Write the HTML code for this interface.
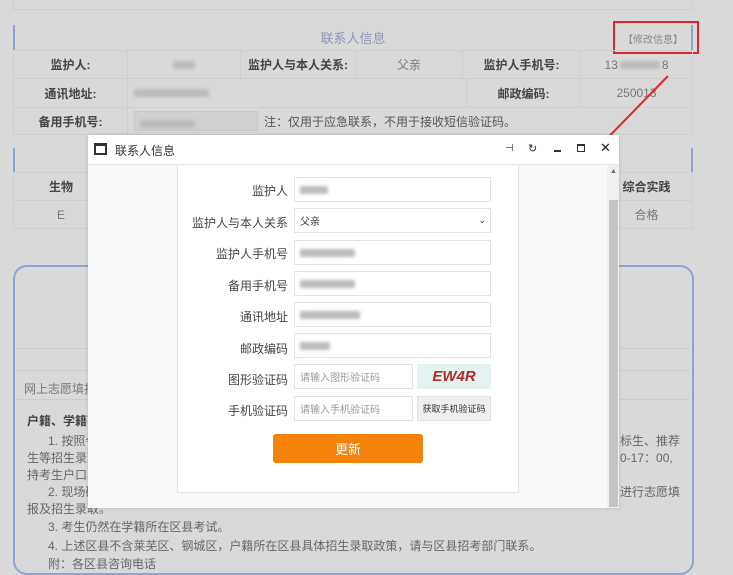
<!DOCTYPE html>
<html><head><meta charset="utf-8"><style>
*{box-sizing:border-box;margin:0;padding:0}
body{width:733px;height:561px;overflow:hidden;background:#d9d9d9;font-family:"Liberation Sans","Noto Sans CJK SC",sans-serif;font-size:12px;color:#333;position:relative}
.a{position:absolute}
.cell{position:absolute;display:flex;align-items:center;justify-content:center;border:1px solid #cfcfcf;font-size:12px}
.b{font-weight:bold;color:#444}
.g{color:#777}
.lbl{position:absolute;left:0;width:288px;text-align:right;font-size:12px;color:#444}
.inp{position:absolute;left:294px;width:197px;height:25px;border:1px solid #e2e2e2;background:#fff;font-size:10px;color:#999;padding-left:5px;display:flex;align-items:center}
.blur{display:inline-block;height:8px;background:#bbb;filter:blur(1.5px);border-radius:2px}
</style></head><body>
<!-- background page -->
<div class="a" style="left:13px;top:0;width:680px;height:10px;border:1px solid #cfcfcf;border-top:none"></div>
<div class="a" style="left:13px;top:25px;width:680px;height:25px;border-left:2px solid #8fa3d0;border-right:2px solid #8fa3d0;display:flex;align-items:center;justify-content:center;color:#8a95b8;font-size:13px">联系人信息</div>
<div class="a" style="left:623px;top:31px;color:#888;font-size:10px">【修改信息】</div>
<div class="a" style="left:613px;top:21px;width:86px;height:33px;border:2px solid #e0262a"></div>
<div class="cell b" style="left:13px;top:50px;width:115px;height:29px">监护人:</div>
<div class="cell" style="left:127px;top:50px;width:114px;height:29px"><span class="blur" style="width:22px"></span></div>
<div class="cell b" style="left:240px;top:50px;width:116px;height:29px">监护人与本人关系:</div>
<div class="cell g" style="left:355px;top:50px;width:108px;height:29px">父亲</div>
<div class="cell b" style="left:462px;top:50px;width:119px;height:29px">监护人手机号:</div>
<div class="cell g" style="left:580px;top:50px;width:113px;height:29px">13<span class="blur" style="width:40px;margin:0 2px"></span>8</div>
<div class="cell b" style="left:13px;top:78px;width:115px;height:30px">通讯地址:</div>
<div class="cell" style="left:127px;top:78px;width:340px;height:30px;justify-content:flex-start;padding-left:6px"><span class="blur" style="width:75px"></span></div>
<div class="cell b" style="left:466px;top:78px;width:115px;height:30px">邮政编码:</div>
<div class="cell g" style="left:580px;top:78px;width:113px;height:30px">250013</div>
<div class="cell b" style="left:13px;top:107px;width:115px;height:28px">备用手机号:</div>
<div class="cell" style="left:127px;top:107px;width:566px;height:28px;justify-content:flex-start;padding-left:6px"><span style="display:inline-block;width:124px;height:20px;background:#d0d0d0;border:1px solid #c8c8c8;padding:5px"><span class="blur" style="width:55px"></span></span><span style="margin-left:6px;color:#555">注：仅用于应急联系，不用于接收短信验证码。</span></div>
<div class="a" style="left:13px;top:148px;width:680px;height:24px;border-left:2px solid #8fa3d0;border-right:2px solid #8fa3d0"></div>
<div class="cell b" style="left:13px;top:172px;width:96px;height:29px">生物</div>
<div class="cell b" style="left:600px;top:172px;width:93px;height:29px">综合实践</div>
<div class="cell g" style="left:13px;top:200px;width:96px;height:29px">E</div>
<div class="cell g" style="left:600px;top:200px;width:93px;height:29px">合格</div>
<div class="a" style="left:13px;top:265px;width:681px;height:310px;border:2px solid #8fa3d0;border-radius:14px"></div>
<div class="a" style="left:16px;top:348px;width:674px;border-top:1px solid #ccc"></div>
<div class="a" style="left:16px;top:370px;width:674px;height:30px;border-top:1px solid #ccc;border-bottom:1px solid #ccc;padding:9px 8px;color:#777">网上志愿填报</div>
<div class="a" style="left:27px;top:412px;font-weight:bold;color:#444">户籍、学籍不</div>
<div class="a" style="left:48px;top:432px;color:#666">1. 按照今</div>
<div class="a" style="left:27px;top:449px;color:#666">生等招生录取</div>
<div class="a" style="left:27px;top:466px;color:#666">持考生户口本</div>
<div class="a" style="left:48px;top:483px;color:#666">2. 现场确</div>
<div class="a" style="left:27px;top:500px;color:#666">报及招生录取。</div>
<div class="a" style="left:48px;top:518px;color:#666">3. 考生仍然在学籍所在区县考试。</div>
<div class="a" style="left:48px;top:537px;color:#666">4. 上述区县不含莱芜区、钢城区，户籍所在区县具体招生录取政策，请与区县招考部门联系。</div>
<div class="a" style="left:48px;top:555px;color:#666">附：各区县咨询电话</div>
<div class="a" style="left:620px;top:432px;color:#666">标生、推荐</div>
<div class="a" style="left:620px;top:449px;color:#666">0-17：00,</div>
<div class="a" style="left:620px;top:483px;color:#666">进行志愿填</div>
<!-- arrow -->
<svg class="a" style="left:0;top:0" width="733" height="561"><line x1="668" y1="76" x2="588" y2="158" stroke="#e0262a" stroke-width="2"/><polygon points="583,164 588,150 595,157" fill="#e0262a"/></svg>
<!-- dialog -->
<div class="a" style="left:88px;top:135px;width:531px;height:373px;background:#f8f9fb;box-shadow:0 0 4px rgba(0,0,0,.15)">
 <div class="a" style="left:0;top:0;width:531px;height:30px;background:#fff;border-bottom:1px solid #e6e6e6">
  <div class="a" style="left:6px;top:8px;width:13px;height:12px;border:2px solid #333;border-top-width:3px"></div>
  <div class="a" style="left:27px;top:7px;font-size:12px;color:#333">联系人信息</div>
  <div class="a" style="left:417px;top:8px;font-size:10px;color:#333">⊣</div>
  <div class="a" style="left:440px;top:7px;font-size:11px;color:#333">↻</div>
  <div class="a" style="left:466px;top:15px;width:7px;height:2px;background:#333"></div>
  <div class="a" style="left:489px;top:9px;width:8px;height:8px;border:1.5px solid #333;border-top-width:2.5px"></div>
  <div class="a" style="left:512px;top:5px;font-size:13px;color:#222">✕</div>
 </div>
 <div class="a" style="left:519px;top:30px;width:12px;height:343px;background:#f0f0f0"></div>
 <div class="a" style="left:521px;top:65px;width:9px;height:307px;background:#c4c4c4"></div>
 <div class="a" style="left:522px;top:33px;font-size:7px;color:#666">▲</div>
 <div class="a" style="left:89px;top:30px;width:342px;height:328px;background:#fff;border:1px solid #e4e4e4;border-top:none"></div>
 <div class="a" style="left:-88px;top:0;width:600px">
  <div class="lbl" style="top:47px">监护人</div><div class="inp" style="top:42px"><span class="blur" style="width:28px"></span></div>
  <div class="lbl" style="top:79px">监护人与本人关系</div><div class="inp" style="top:73px;color:#333;justify-content:space-between;padding-right:4px">父亲<span style="font-size:9px">⌄</span></div>
  <div class="lbl" style="top:110px">监护人手机号</div><div class="inp" style="top:105px"><span class="blur" style="width:55px"></span></div>
  <div class="lbl" style="top:142px">备用手机号</div><div class="inp" style="top:136px"><span class="blur" style="width:55px"></span></div>
  <div class="lbl" style="top:173px">通讯地址</div><div class="inp" style="top:167px"><span class="blur" style="width:60px"></span></div>
  <div class="lbl" style="top:205px">邮政编码</div><div class="inp" style="top:198px"><span class="blur" style="width:30px"></span></div>
  <div class="lbl" style="top:236px">图形验证码</div><div class="inp" style="top:229px;width:119px">请输入图形验证码</div>
  <div class="a" style="left:417px;top:229px;width:74px;height:25px;background:#e4f2f2;color:#b02a2a;font-weight:bold;font-size:15px;text-align:center;line-height:25px;font-style:italic">EW4R</div>
  <div class="lbl" style="top:267px">手机验证码</div><div class="inp" style="top:261px;width:119px">请输入手机验证码</div>
  <div class="a" style="left:417px;top:261px;width:74px;height:25px;background:#efefef;border:1px solid #e0e0e0;font-size:9px;color:#333;display:flex;align-items:center;justify-content:center">获取手机验证码</div>
  <div class="a" style="left:273px;top:299px;width:150px;height:29px;background:#f5820a;border-radius:3px;color:#fff;font-size:13px;display:flex;align-items:center;justify-content:center">更新</div>
 </div>
</div>
</body></html>
